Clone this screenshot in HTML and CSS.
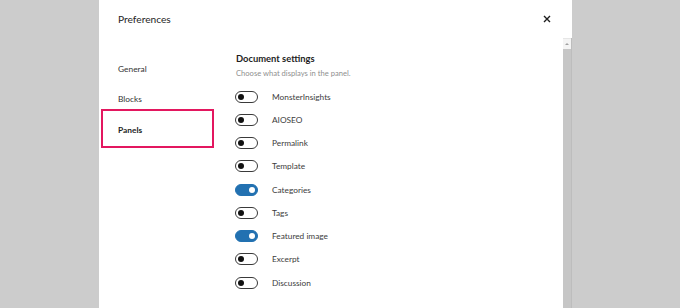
FILE: index.html
```html
<!DOCTYPE html>
<html>
<head>
<meta charset="utf-8">
<link rel="stylesheet" href="styles.css">
</head>
<body>
<div class="modal">
  <div class="header">
    <div class="title">Preferences</div>
    <div class="close">
      <svg width="8" height="8" viewBox="0 0 8 8"><path d="M1 1L7 7M7 1L1 7" stroke="#1e1e1e" stroke-width="1.4"/></svg>
    </div>
  </div>
  <div class="body">
    <nav class="sidebar">
      <div class="nav-item">General</div>
      <div class="nav-item">Blocks</div>
      <div class="nav-item active">Panels</div>
    </nav>
    <div class="content">
      <div class="heading">Document settings</div>
      <div class="sub">Choose what displays in the panel.</div>
      <div class="rows">
        <div class="row"><span class="toggle"></span><span class="label">MonsterInsights</span></div>
        <div class="row"><span class="toggle"></span><span class="label">AIOSEO</span></div>
        <div class="row"><span class="toggle"></span><span class="label">Permalink</span></div>
        <div class="row"><span class="toggle"></span><span class="label">Template</span></div>
        <div class="row"><span class="toggle on"></span><span class="label">Categories</span></div>
        <div class="row"><span class="toggle"></span><span class="label">Tags</span></div>
        <div class="row"><span class="toggle on"></span><span class="label">Featured image</span></div>
        <div class="row"><span class="toggle"></span><span class="label">Excerpt</span></div>
        <div class="row"><span class="toggle"></span><span class="label">Discussion</span></div>
      </div>
    </div>
    <div class="scrollbar">
      <div class="arrow"></div>
      <div class="track"></div>
    </div>
  </div>
</div>
</body>
</html>
```
FILE: styles.css
```css
html, body {
  margin: 0;
  padding: 0;
  height: 100%;
}
body {
  background: #cccccc;
  font-family: "Lato", "Open Sans", sans-serif;
  color: #1e1e1e;
  overflow: hidden;
}
.modal {
  margin-left: 99px;
  width: 473px;
  height: 308px;
  background: #ffffff;
  display: flex;
  flex-direction: column;
}
.header {
  height: 38px;
  display: flex;
  align-items: center;
  justify-content: space-between;
  padding: 0 21px 0 19px;
}
.title {
  font-size: 10.2px;
  font-weight: 400;
  color: #1e1e1e;
}
.close {
  display: flex;
  align-items: center;
  width: 8px;
  height: 8px;
}
.body {
  flex: 1;
  display: flex;
}
.sidebar {
  width: 115px;
  padding-top: 21px;
  display: flex;
  flex-direction: column;
  gap: 10px;
}
.nav-item {
  height: 20px;
  display: flex;
  align-items: center;
  padding-left: 19px;
  font-size: 8.4px;
  color: #333;
}
.nav-item.active {
  box-sizing: border-box;
  margin-top: -10px;
  margin-left: 2px;
  height: 39px;
  padding-left: 15px;
  padding-top: 3px;
  border: 2px solid #e3175f;
  font-weight: 700;
  color: #1e1e1e;
}
.content {
  flex: 1;
  padding-left: 22px;
  padding-top: 14px;
}
.heading {
  font-size: 9.4px;
  font-weight: 700;
  line-height: 14px;
  color: #1e1e1e;
}
.sub {
  margin-top: 2px;
  font-size: 7.6px;
  line-height: 11px;
  color: #8f8f8f;
}
.rows {
  margin-top: 6px;
  display: flex;
  flex-direction: column;
}
.row {
  height: 23.25px;
  display: flex;
  align-items: center;
}
.toggle {
  position: relative;
  box-sizing: border-box;
  width: 23px;
  height: 12px;
  margin-left: -1px;
  border: 1px solid #3a3a3a;
  border-radius: 6px;
  background: #fff;
}
.toggle::after {
  content: "";
  position: absolute;
  top: 2px;
  left: 2px;
  width: 6px;
  height: 6px;
  border-radius: 50%;
  background: #111;
}
.toggle.on {
  background: #2271b1;
  border-color: #2271b1;
}
.toggle.on::after {
  left: auto;
  right: 2px;
  background: #fff;
}
.label {
  margin-left: 14px;
  font-size: 8.3px;
  color: #3c3c3c;
}
.scrollbar {
  width: 8px;
  display: flex;
  flex-direction: column;
  border-right: 1px solid #bdbdbd;
}
.arrow {
  height: 10px;
  background: #f4f4f4;
  border-top: 1px solid #e6e6e6;
  position: relative;
}
.arrow::after {
  content: "";
  position: absolute;
  left: 2px;
  top: 4px;
  border-left: 2px solid transparent;
  border-right: 2px solid transparent;
  border-bottom: 2px solid #a0a0a0;
}
.track {
  flex: 1;
  background: #c6c6c6;
}
```
